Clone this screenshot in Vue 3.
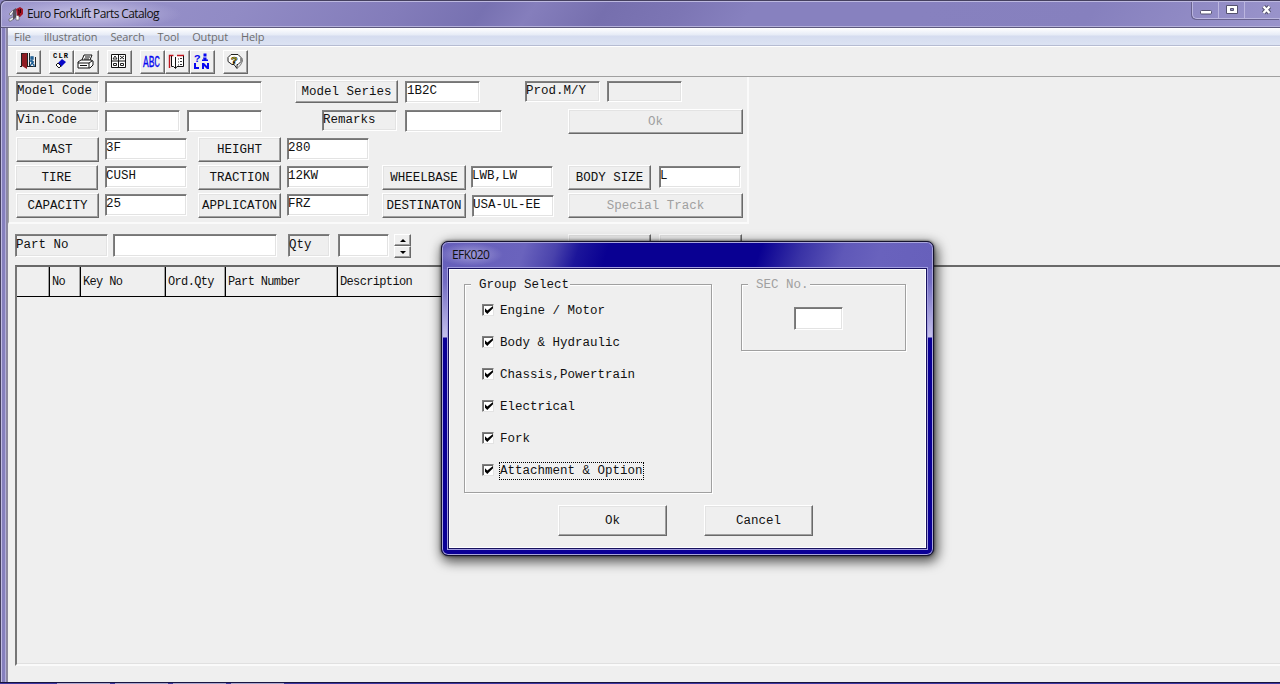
<template>
  <div class="window">
    <header class="title-bar">
      <svg class="app-icon" viewBox="0 0 16 16">
        <path d="M1 8l4-4 1 1-3 5zM1 13l6-3 1 1-5 4H1z" fill="#e9e9ef" stroke="#555" stroke-width=".6" />
        <path d="M5 4l3-2v9l-3 3z" fill="#55525e" />
        <path d="M8 3l4-2 3 2v5l-3 3-3-1z" fill="#a31525" />
        <path d="M10 4h1v5M12.500 3v4" stroke="#330008" fill="none" />
        <path d="M8 9l3 1v4H8z" fill="#fff" stroke="#444" stroke-width=".5" />
      </svg>
      <span class="title">Euro ForkLift Parts Catalog</span>
      <div class="caption-buttons">
        <span class="caption">
          <svg width="14" height="12" viewBox="0 0 14 12"><rect x="1.5" y="7.5" width="11" height="3.500" rx="1" fill="#fff" stroke="#55526f" /></svg>
        </span>
        <span class="caption">
          <svg width="14" height="12" viewBox="0 0 14 12">
            <path d="M1.500 2.500h11v8h-11zM5.500 5.500v2h3v-2z" fill="#fff" fill-rule="evenodd" stroke="#55526f" />
          </svg>
        </span>
        <span class="caption close">
          <svg width="14" height="12" viewBox="0 0 14 12">
            <path d="M3.500 3.500l6 6.500M9.500 3.500l-6 6.500" stroke="#55526f" stroke-width="4.400" />
            <path d="M3.500 3.500l6 6.500M9.500 3.500l-6 6.500" stroke="#fff" stroke-width="2.400" />
          </svg>
        </span>
      </div>
    </header>

    <div class="frame">
      <nav class="menu">
        <span v-for="item in menu" :key="item">{{ item }}</span>
      </nav>

      <div class="toolbar">
        <button class="tool">
          <svg viewBox="0 0 18 18">
            <path d="M2 1h7v13H2z" fill="#222" />
            <path d="M3 2l5-1v16l-5-3z" fill="#8f1c22" />
            <path d="M1 14.500h2M8 14.500h9M10.500 1v13M16.500 5v10" stroke="#222" fill="none" />
            <path d="M12 5h2v2h-2zM10 9h3v1h2M13 8v3l2 2v2M13 11l-2 3" fill="none" stroke="#12568f" stroke-width="1.300" />
          </svg>
        </button>
        <button class="tool gap">
          <svg viewBox="0 0 18 18">
            <text x="1" y="5.500" font-size="7" font-weight="700" textLength="15">CLR</text>
            <path d="M6 11l4-4 4 3-5 5z" fill="#0808c8" />
            <path d="M6 11l3 3-2 2-3-3z" fill="#fff" stroke="#000" stroke-width=".9" />
          </svg>
        </button>
        <button class="tool">
          <svg viewBox="0 0 18 18">
            <path d="M5 8l2-5h8l-2 5M1 10l3-2h10l2 1v4l-3 3H1zM1 11h11v5M12 11l3-2" fill="#fff" stroke="#111" />
            <path d="M8 5h5M7 7h5M3 13.500h7" stroke="#111" />
          </svg>
        </button>
        <button class="tool gap">
          <svg viewBox="0 0 18 18">
            <path d="M1.500 2.500h14v13h-14zM8.500 2v14M1 9h15" fill="#fff" stroke="#111" />
            <path d="M3 7l2-3 2 3zM10 4l4 3M14 4l-4 3M3.500 11.500h3v2h-3zM10.500 11.500h3v2h-3z" fill="none" stroke="#222" />
          </svg>
        </button>
        <button class="tool gap">
          <svg viewBox="0 0 18 18"><text x="0" y="14.500" font-size="16" class="abc" textLength="17" lengthAdjust="spacingAndGlyphs">ABC</text></svg>
        </button>
        <button class="tool">
          <svg viewBox="0 0 18 18">
            <path d="M1.500 3.500h4l2 1.500 1.500-1.500h7v11.500H8l-1.500 1.500-1.500-1.500H1.500z" fill="#fff" />
            <path d="M1.500 16V3.500h4M9 3.500h7" stroke="#c01820" stroke-width="1.400" fill="none" />
            <path d="M3.500 4v10.500M3.500 14.500h2l2 2 1.500-2h6.500V4M7.500 5v11" stroke="#111" fill="none" />
            <path d="M10 7h1M12 6.500h2M10 10h1M12 9.500h2M10 13h1M12 12.500h2" stroke="#333" />
          </svg>
        </button>
        <button class="tool">
          <svg viewBox="0 0 18 18" class="blue">
            <text x="1" y="9.500" font-size="11" font-weight="700">?</text>
            <path d="M10.500 1.500h3v3h-3zM10 5.500h3.500v2H15V9H9V7.500h1.500zM1 11h2v4h3v2H1zM9 11h2l3 3v-3h2v6h-2l-3-3v3H9z" />
          </svg>
        </button>
        <button class="tool gap">
          <svg viewBox="0 0 18 18">
            <path d="M5 2.500h7l3 3v4l-3 3h-1v4l-3-4H6l-4-3v-4z" fill="#fff" stroke="#222" />
            <path d="M16 6l.5 3-2 4-3 3" stroke="#777" fill="none" />
            <text x="5" y="11.500" font-size="11" font-weight="700" class="help">?</text>
          </svg>
        </button>
      </div>

      <main class="body">
        <section class="form">
          <div class="row first">
            <span class="label w83">Model Code</span>
            <span class="field w157 s6"></span>
            <button class="btn series">Model Series</button>
            <span class="field value w75 s7">1B2C</span>
            <span class="label w75 prod">Prod.M/Y</span>
            <span class="label w75 s7"></span>
          </div>
          <div class="row second">
            <span class="label w83">Vin.Code</span>
            <span class="field w75 s6"></span>
            <span class="field w75 s7"></span>
            <span class="label w75 remarks">Remarks</span>
            <span class="field w97 s8"></span>
            <button class="btn wide ok" disabled>Ok</button>
          </div>
          <div v-for="(row, i) in specs" :key="i" class="row spec" :class="'spec' + i">
            <template v-for="cell in row" :key="cell.name">
              <button class="btn">{{ cell.name }}</button>
              <span class="field">{{ cell.value }}</span>
            </template>
            <button v-if="i === 2" class="btn wide" disabled>Special Track</button>
          </div>
        </section>

        <section class="part-row">
          <span class="label part-label">Part No</span>
          <span class="field part-input"></span>
          <span class="label qty-label">Qty</span>
          <span class="field qty-input"></span>
          <span class="spin">
            <button><i class="up"></i></button>
            <button><i class="down"></i></button>
          </span>
          <button class="btn add"></button>
          <button class="btn del"></button>
        </section>

        <section class="list">
          <div class="list-head">
            <span v-for="(col, i) in columns" :key="i">{{ col }}</span>
          </div>
        </section>
      </main>
    </div>
    <footer class="taskbar"><i v-for="n in 4" :key="n"></i></footer>

    <div class="dialog">
      <div class="dialog-title"><span>EFK020</span></div>
      <div class="dialog-body">
        <div class="groups">
          <div class="group select">
            <span class="legend">Group Select</span>
            <label v-for="g in groups" :key="g.name" class="check" :class="{ focused: g.focused }">
              <span class="box"><svg viewBox="0 0 7 7"><path d="M0 2v3l2 2 5-5V0L2 4z" /></svg></span>
              <span class="check-text">{{ g.name }}</span>
            </label>
          </div>
          <div class="group sec">
            <span class="legend">SEC No.</span>
            <span class="field"></span>
          </div>
        </div>
        <div class="actions">
          <button class="btn">Ok</button>
          <button class="btn">Cancel</button>
        </div>
      </div>
    </div>
  </div>
</template>

<script setup>
import { ref } from 'vue';

const menu = ['File', 'illustration', 'Search', 'Tool', 'Output', 'Help'];

const specs = ref([
  [
    { name: 'MAST', value: '3F' },
    { name: 'HEIGHT', value: '280' },
  ],
  [
    { name: 'TIRE', value: 'CUSH' },
    { name: 'TRACTION', value: '12KW' },
    { name: 'WHEELBASE', value: 'LWB,LW' },
    { name: 'BODY SIZE', value: 'L' },
  ],
  [
    { name: 'CAPACITY', value: '25' },
    { name: 'APPLICATON', value: 'FRZ' },
    { name: 'DESTINATON', value: 'USA-UL-EE' },
  ],
]);

const columns = ['', 'No', 'Key No', 'Ord.Qty', 'Part Number', 'Description'];

const groups = ref([
  { name: 'Engine / Motor' },
  { name: 'Body & Hydraulic' },
  { name: 'Chassis,Powertrain' },
  { name: 'Electrical' },
  { name: 'Fork' },
  { name: 'Attachment & Option', focused: true },
]);
</script>

<style>
body {
  overflow: hidden;
}
</style>

<style scoped>
* {
  box-sizing: border-box;
}

.window {
  position: relative;
  width: 1280px;
  height: 684px;
  overflow: hidden;
  display: flex;
  flex-direction: column;
  background: #8a84c0;
  font-family: "Liberation Mono", "Courier New", monospace;
  font-size: 12.5px;
  color: #111;
}

button {
  font: inherit;
  color: inherit;
  padding: 0;
  margin: 0;
}

/* title bar */
.title-bar {
  height: 28px;
  flex: none;
  display: flex;
  align-items: flex-start;
  padding-left: 9px;
  border-top: 1px solid #45405f;
  border-left: 1px solid #45405f;
  border-bottom: 1px solid #5d597d;
  border-top-left-radius: 6px;
  box-shadow: inset 1px 1px 0 #bdb9e0, inset 0 -1px 0 #b5b1da;
  background:
    radial-gradient(ellipse 95px 16px at 86px 13px, rgba(215, 211, 240, .75), transparent),
    linear-gradient(125deg, #9b95cc 0, #918bc5 200px, #837cba 330px, #7771b1 400px, #857ebc 440px, #766fae 500px, #7c75b4 560px, #8781bf 620px, #8781bf 760px, #8680be 900px, #9a94cb 100%);
}

.app-icon {
  width: 16px;
  height: 16px;
  margin-top: 5px;
  margin-left: -2px;
}

.title {
  font-family: "Open Sans", "Noto Sans", sans-serif;
  font-size: 12px;
  line-height: 16px;
  letter-spacing: -.61px;
  margin: 5px 0 0 3px;
  white-space: nowrap;
}

.caption-buttons {
  display: flex;
  margin-left: auto;
  height: 18px;
  border: 1px solid #bbb6df;
  border-top: 0;
  border-right: 0;
  border-bottom-left-radius: 5px;
  box-shadow: -1px 1px 0 #68628f;
}

.caption {
  width: 26px;
  display: flex;
  justify-content: center;
  padding-top: 2px;
  border-right: 1px solid #bbb6df;
}

.caption.close {
  width: 35px;
  padding-left: 9px;
  border-right: 0;
}

/* client area */
.frame {
  flex: 1;
  display: flex;
  flex-direction: column;
  padding-left: 8px;
  background: linear-gradient(to right, #45405f 1px, #c0bce2 1px 2px, #8680be 2px 5px, #b1addb 5px 6px, #8c889f 6px 8px, #efefef 8px);
}

.menu {
  height: 18px;
  flex: none;
  display: flex;
  gap: 13px;
  padding-left: 6px;
  font-family: "Open Sans", "Noto Sans", sans-serif;
  font-size: 11px;
  line-height: 18px;
  letter-spacing: -.12px;
  color: #6d6d6d;
  border-bottom: 1px solid #b6bcd2;
  background: linear-gradient(#fff 0, #e6ebf6 7px, #d5dcef 8px, #dce3f3 100%);
}

.toolbar {
  height: 31px;
  flex: none;
  display: flex;
  align-items: flex-start;
  padding: 3px 0 0 8px;
  border-top: 1px solid #fff;
  border-bottom: 1px solid #a0a0a0;
  background: #efefef;
}

.tool {
  width: 25px;
  height: 24px;
  background: #efefef;
  border: 1px solid;
  border-color: #fff #696969 #696969 #fff;
  box-shadow: inset -1px -1px 0 #a0a0a0;
  display: flex;
  justify-content: flex-start;
  align-items: flex-start;
}

.tool.gap {
  margin-left: 8px;
}

.tool svg {
  flex: none;
  width: 18px;
  height: 18px;
  margin: 1px 0 0 2px;
  overflow: visible;
  font-family: "Liberation Mono", monospace;
}

.tool .abc {
  fill: #0808f0;
  stroke: #0808f0;
  stroke-width: .3px;
}

.tool .blue {
  fill: #0808f0;
}

.tool .help {
  fill: #f0df20;
  stroke: #111;
  stroke-width: .7px;
}

.body {
  flex: 1;
  display: flex;
  flex-direction: column;
  background: #efefef;
}

/* sunken and raised controls */
.label,
.field {
  flex: none;
  height: 21px;
  line-height: 15px;
  white-space: pre;
  overflow: hidden;
  border: 1px solid;
  border-color: #808080 #fff #fff #808080;
  box-shadow: inset 1px 1px 0 #757575, inset -1px -1px 0 #e3e3e3;
  padding: 2px 0 0;
}

.field {
  height: 22px;
  background: #fff;
}

.btn {
  flex: none;
  width: 83px;
  height: 25px;
  background: #efefef;
  border: 1px solid;
  border-color: #fff #696969 #696969 #fff;
  box-shadow: inset -1px -1px 0 #a0a0a0, inset 1px 1px 0 #e3e3e3;
  white-space: nowrap;
  text-align: center;
}

.btn:disabled {
  color: #a0a0a0;
}

/* search form */
.form {
  width: 741px;
  height: 147px;
  flex: none;
  padding: 4px 0 0 7px;
  border-left: 1px solid #a0a0a0;
  border-right: 2px solid #fafafa;
  border-bottom: 2px solid #fafafa;
}

.row {
  display: flex;
  align-items: flex-start;
  height: 28px;
}

.row.first {
  height: 29px;
}

.w75 { width: 75px; }
.w83 { width: 83px; }
.w97 { width: 97px; }
.w157 { width: 157px; }
.s6 { margin-left: 6px; }
.s7 { margin-left: 7px; }
.s8 { margin-left: 8px; }

.series {
  width: 103px;
  height: 23px;
  margin: -1px 0 0 33px;
}

.value {
  padding-left: 1px;
}

.prod {
  margin-left: 45px;
}

.remarks {
  margin-left: 60px;
}

.wide,
.spec .wide:nth-of-type(4) {
  width: 175px;
}

.ok {
  margin: -1px 0 0 66px;
}

.spec .btn {
  margin-top: -1px;
}

.spec .field {
  width: 82px;
  margin-left: 6px;
}

.spec .field + .btn {
  margin-left: 11px;
}

.spec .btn:nth-of-type(3) {
  width: 84px;
  margin-left: 13px;
}

.spec .btn:nth-of-type(3) + .field {
  margin-left: 5px;
}

.spec .btn:nth-of-type(4) {
  width: 83px;
  margin-left: 15px;
}

.spec1 .field:nth-of-type(4) {
  margin-left: 8px;
}

.spec1 > .btn:first-child {
  margin-left: -1px;
  margin-right: 1px;
}

.spec2 .btn:nth-of-type(3) + .field {
  margin: 1px -1px 0 6px;
}

.spec2 .wide:nth-of-type(4) {
  width: 175px;
}

/* part row */
.part-row {
  display: flex;
  align-items: flex-start;
  height: 41px;
  padding: 10px 0 0 7px;
}

.part-row .label {
  height: 23px;
  padding-top: 3px;
}

.part-row .field {
  height: 23px;
}

.part-label { width: 93px; }
.part-input { width: 164px; margin-left: 5px; }
.qty-label { width: 42px; margin-left: 11px; }
.qty-input { width: 51px; margin-left: 8px; }

.spin {
  display: flex;
  flex-direction: column;
  width: 17px;
  margin-left: 5px;
}

.spin button {
  height: 12px;
  display: flex;
  align-items: center;
  justify-content: center;
  background: #efefef;
  border: 1px solid;
  border-color: #fff #696969 #696969 #fff;
  box-shadow: inset -1px -1px 0 #a0a0a0;
}

.up,
.down {
  border: 3px solid transparent;
  border-top-width: 0;
  border-bottom-color: #000;
}

.down {
  border-top: 3px solid #000;
  border-bottom-width: 0;
}

.add { margin-left: 157px; }
.del { margin-left: 8px; }

/* parts list */
.list {
  flex: 1;
  margin: 0 0 16px 7px;
  border-top: 2px solid #696969;
  border-left: 2px solid #757575;
  border-bottom: 2px solid #fafafa;
  box-shadow: inset 0 -1px 0 #e0e0e0;
}

.list-head {
  display: flex;
  width: 583px;
  height: 30px;
  border-bottom: 1px solid #000;
  line-height: 30px;
  font-size: 12px;
  letter-spacing: -.65px;
}

.list-head span {
  width: 32px;
  padding-left: 2px;
  border-right: 1px solid #000;
  box-shadow: inset -1px 0 0 #a0a0a0;
  white-space: pre;
}

.list-head span:nth-child(1) { width: 33px; }
.list-head span:nth-child(2) { width: 31px; }
.list-head span:nth-child(3) { width: 85px; }
.list-head span:nth-child(4) { width: 60px; }
.list-head span:nth-child(5) { width: 112px; }
.list-head span:nth-child(6) { width: 262px; }

.taskbar {
  height: 2px;
  flex: none;
  display: flex;
  gap: 5px;
  padding-left: 57px;
  border-top: 1px solid #17133f;
  background: #3d37a0;
}

.taskbar i {
  width: 53px;
  background: #a8a5cd;
}

/* dialog */
.dialog {
  position: absolute;
  left: 441px;
  top: 241px;
  width: 493px;
  height: 315px;
  display: flex;
  flex-direction: column;
  padding: 0 6px 6px;
  border: 1px solid #15132e;
  border-radius: 7px;
  background:
    linear-gradient(108deg, #665fba 0, #6a63bd 80px, #4a43ac 110px, #1c159a 132px, #090092 160px, #090092 305px, #3a33a6 345px, #5f58b8 385px, #6962bd 420px, #6760bb 100%) 0 0 / 100% 27px no-repeat,
    linear-gradient(to bottom, #6a63bd 0, #736cc3 40px, #c5c1ec 95px, #0b0096 96px) 0 0 / 7px 100% no-repeat,
    linear-gradient(to bottom, #6a63bd 0, #736cc3 40px, #c5c1ec 95px, #0b0096 96px) 100% 0 / 7px 100% no-repeat,
    #0b0096;
  box-shadow: inset 0 0 0 1px #a9a5dc, 0 0 3px rgba(0, 0, 0, .7), 2px 4px 12px 2px rgba(0, 0, 0, .65);
}

.dialog-title {
  height: 26px;
  flex: none;
  padding: 5px 0 0 4px;
  font-family: "Open Sans", "Noto Sans", sans-serif;
  font-size: 12px;
  line-height: 15px;
  letter-spacing: -.6px;
}

.dialog-title span {
  background: radial-gradient(ellipse closest-side, rgba(180, 175, 225, .75), transparent);
  padding: 3px 14px;
  margin-left: -14px;
}

.dialog-body {
  flex: 1;
  display: flex;
  flex-direction: column;
  background: #efefef;
  border: 1px solid #17115e;
  outline: 1px solid #a39ee0;
  outline-offset: 0;
  box-shadow: inset 0 0 0 1px #fff;
}

.groups {
  display: flex;
  align-items: flex-start;
  padding: 15px 0 0 15px;
}

.group {
  position: relative;
  border: 1px solid #a0a0a0;
  box-shadow: 1px 1px 0 #fff, inset 1px 1px 0 #fff;
}

.legend {
  position: absolute;
  left: 6px;
  top: -8px;
  padding: 0 1px 0 8px;
  background: #efefef;
  line-height: 16px;
  white-space: pre;
}

.select {
  width: 248px;
  height: 209px;
  padding: 9px 0 0 17px;
}

.check {
  height: 32px;
  display: flex;
  align-items: flex-start;
}

.box {
  width: 12px;
  height: 12px;
  margin-top: 10px;
  display: flex;
  background: #fff;
  border: 1px solid;
  border-color: #808080 #e3e3e3 #e3e3e3 #808080;
  box-shadow: inset 1px 1px 0 #696969;
}

.box svg {
  width: 8px;
  height: 8px;
  margin: 1px 0 0 2px;
}

.check-text {
  margin: 8px 0 0 5px;
  padding: 1px 0 0;
  line-height: 15px;
  border: 1px solid transparent;
  white-space: nowrap;
}

.focused .check-text {
  border: 1px dotted #000;
}

.sec {
  width: 165px;
  height: 67px;
  margin-left: 29px;
  padding: 22px 0 0 52px;
}

.sec .legend {
  color: #a0a0a0;
}

.sec .field {
  display: block;
  width: 49px;
  height: 23px;
}

.actions {
  display: flex;
  gap: 37px;
  margin: 12px 0 0 109px;
}

.actions .btn {
  width: 109px;
  height: 31px;
}
</style>
